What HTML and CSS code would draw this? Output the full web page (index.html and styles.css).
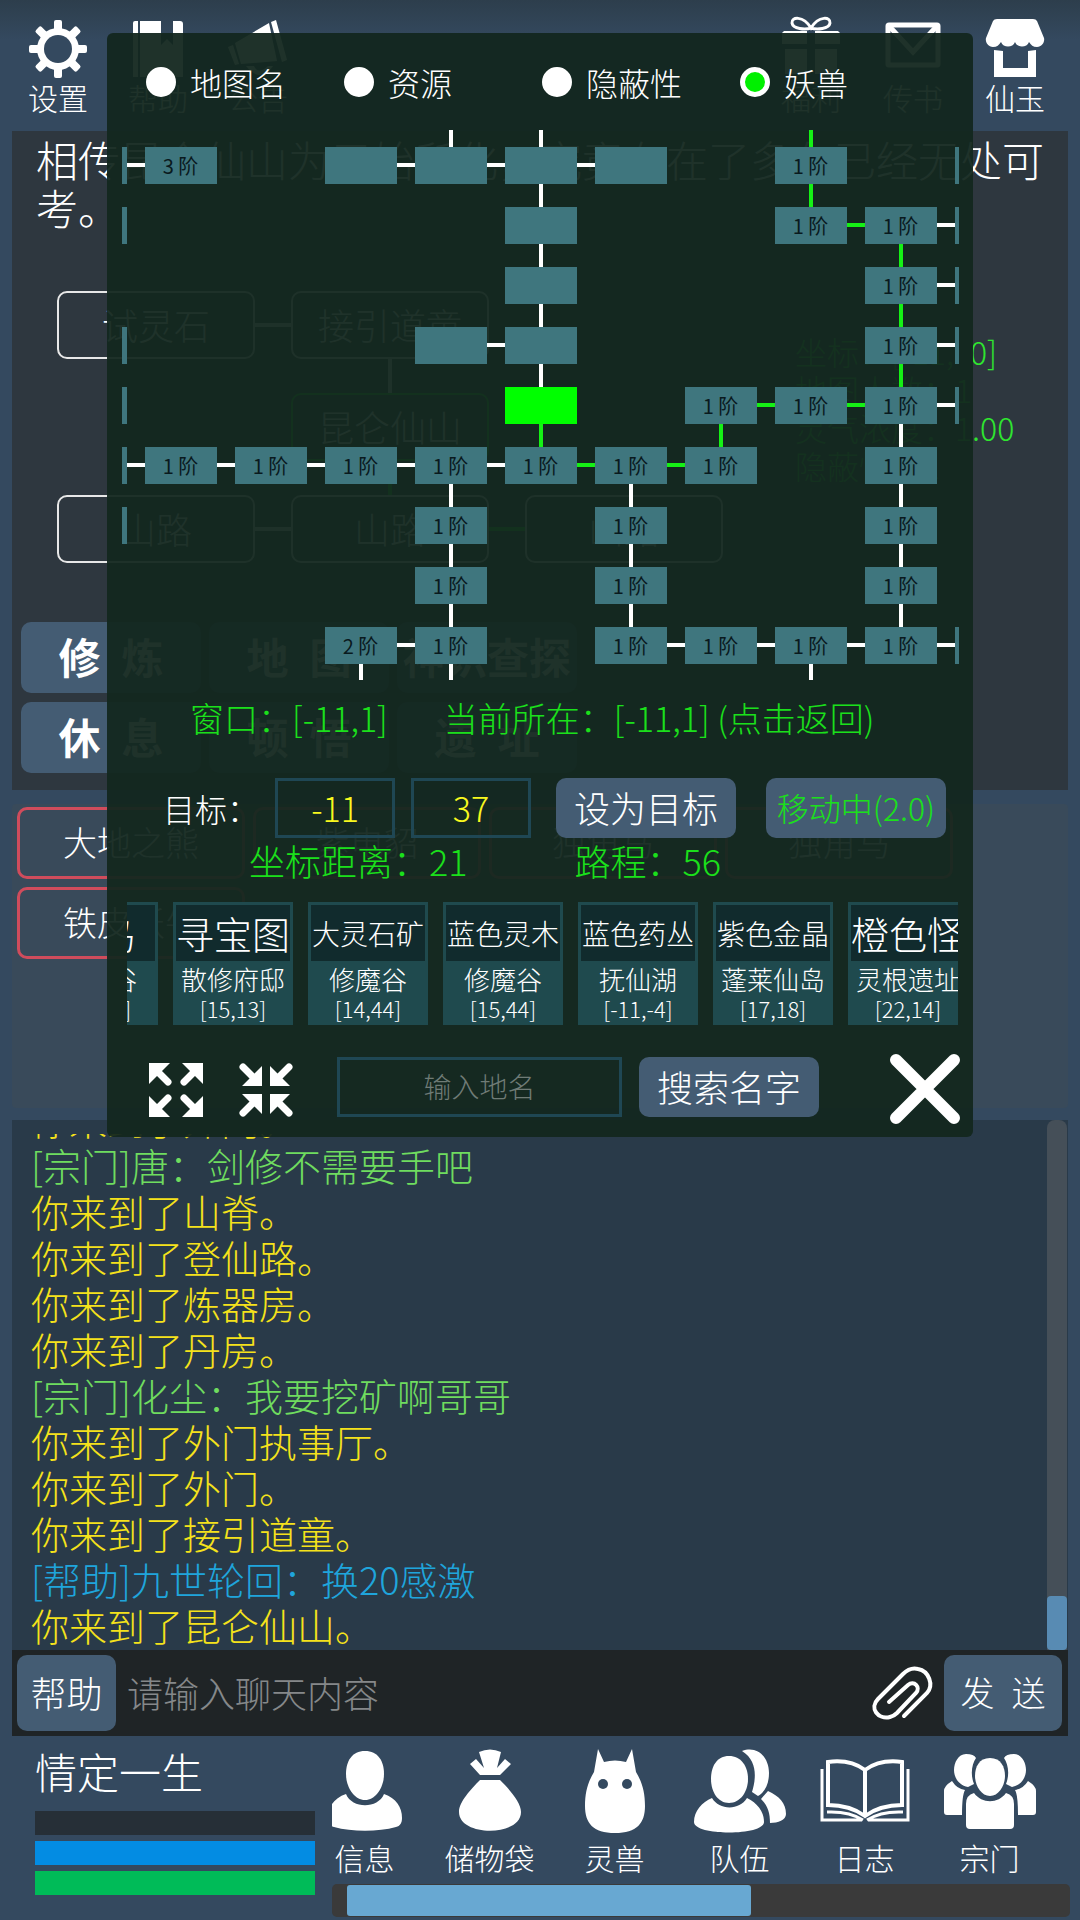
FILE: index.html
```html
<!DOCTYPE html>
<html lang="zh-CN">
  <head>
    <meta charset="UTF-8" />
    <meta name="viewport" content="width=device-width, initial-scale=1.0" />
    <title>昆仑仙山</title>
    <link rel="stylesheet" href="styles.css" />
  </head>
  <body>
    <div class="app">
      <header class="top">
        <div class="top-group">
          <button class="top-btn">
            <svg viewBox="0 0 60 60">
              <g fill="#fff">
                <rect x="26" y="1" width="8" height="58" rx="2" />
                <rect x="26" y="1" width="8" height="58" rx="2" transform="rotate(45 30 30)" />
                <rect x="26" y="1" width="8" height="58" rx="2" transform="rotate(90 30 30)" />
                <rect x="26" y="1" width="8" height="58" rx="2" transform="rotate(135 30 30)" />
                <circle cx="30" cy="30" r="21" />
              </g>
              <circle cx="30" cy="30" r="14" fill="#34495f" />
            </svg>
            设置
          </button>
          <button class="top-btn">
            <svg viewBox="0 0 60 60" fill="#fff">
              <path d="M7 2h3v56H5V4q0-2 2-2zM12 2h21v24l6-6 6 6V2h7q3 0 3 3v53H12z" />
            </svg>
            帮助
          </button>
          <button class="top-btn">
            <svg viewBox="0 0 60 60" fill="#fff">
              <path d="M0 28l5-2 6 19-4 1zM7 24 41 4l8 38-36 3zM43 3l5-2 11 40-5 2zM18 47h8q4 9 14 0h5q-12 18-27 0z" />
            </svg>
            公告
          </button>
        </div>
        <div class="top-group right">
          <button class="top-btn">
            <svg viewBox="0 0 60 60" fill="#fff">
              <path d="M30 9C22-4 10-2 11 4s13 7 19 5c6 2 18 1 19-5S38-4 30 9z" fill="none" stroke="#fff" stroke-width="3" />
              <path d="M3 12h23v13H1V14zM34 12h23l2 2v11H34zM4 30h22v25H4zM34 30h22v25H34z" />
            </svg>
            福利
          </button>
          <button class="top-btn">
            <svg viewBox="0 0 60 60" fill="none" stroke="#fff" stroke-width="5">
              <rect x="5" y="6" width="50" height="40" rx="1" />
              <path d="M6 7l24 26L54 7" />
            </svg>
            传书
          </button>
          <button class="top-btn">
            <svg viewBox="0 0 60 60" fill="#fff">
              <path d="M12 0h36q3 0 4 2l7 17c1 4-2 9-7 9-4 0-6-2-8-5-2 6-12 6-14 0-2 6-12 6-14 0-2 3-4 5-8 5C3 28 0 23 1 19L8 2q1-2 4-2z" />
              <path d="M9 31l9 1v17h25V32l8-1v27H9z" />
            </svg>
            仙玉
          </button>
        </div>
      </header>

      <section class="panel scene">
        <p class="story">相传昆仑仙山为元始所化，究竟存在了多久已经无处可考。</p>
        <div class="scene-body">
          <div class="places">
            <button class="place link-right">试灵石</button>
            <button class="place link-down">接引道童</button>
            <span></span>
            <span></span>
            <button class="place here link-down">昆仑仙山</button>
            <span></span>
            <button class="place link-right">山路</button>
            <button class="place link-right way">山路</button>
            <button class="place">山路</button>
          </div>
          <div class="info">
            <div>坐标：[-11,&ensp;0]</div>
            <div>地图人数：1</div>
            <div>灵气浓度：1.00</div>
            <div>隐蔽性：1</div>
          </div>
        </div>
        <div class="actions">
          <button class="btn act">修&ensp;炼</button>
          <button class="btn act">地&ensp;图</button>
          <button class="btn act">神识查探</button>
          <button class="btn act">休&ensp;息</button>
          <button class="btn act">顿&ensp;悟</button>
          <button class="btn act">遗&ensp;址</button>
        </div>
      </section>

      <section class="panel monsters">
        <button class="monster">大地之熊</button>
        <button class="monster">紫电貂</button>
        <button class="monster">独角马</button>
        <button class="monster">独角马</button>
        <button class="monster">铁皮妖牛</button>
      </section>

      <section class="chat">
        <div class="log">
          <p>你来到了外门。</p>
          <p class="sect">[宗门]唐：剑修不需要手吧</p>
          <p>你来到了山脊。</p>
          <p>你来到了登仙路。</p>
          <p>你来到了炼器房。</p>
          <p>你来到了丹房。</p>
          <p class="sect">[宗门]化尘：我要挖矿啊哥哥</p>
          <p>你来到了外门执事厅。</p>
          <p>你来到了外门。</p>
          <p>你来到了接引道童。</p>
          <p class="help">[帮助]九世轮回：换20感激</p>
          <p>你来到了昆仑仙山。</p>
        </div>
        <div class="log-bar"><div class="log-thumb"></div></div>
      </section>

      <form class="say" onsubmit="return false">
        <button class="btn say-channel" type="button">帮助</button>
        <input class="say-text" type="text" aria-label="聊天内容" placeholder="请输入聊天内容" />
        <button class="say-file" type="button" aria-label="附件">
          <svg viewBox="0 0 60 54" fill="none" stroke="#fff" stroke-width="4" stroke-linecap="round">
            <path d="M32 50 55 27C62 19 57 5 46 3q-8-2-15 5L6 33c-9 9 0 21 12 18q4-1 7-4L44 27c5-6-2-13-8-8L17 36" />
          </svg>
        </button>
        <button class="btn say-send">发&ensp;送</button>
      </form>

      <footer class="bottom">
        <div class="player">
          <div class="player-name">情定一生</div>
          <div class="bar exp"></div>
          <div class="bar mana"></div>
          <div class="bar life"></div>
        </div>
        <div class="menu">
          <nav class="menu-list">
            <button class="menu-btn">
              <svg viewBox="0 0 92 84" fill="#fff">
                <path d="M46 2c13 0 19 10 19 23S57 51 46 51 27 38 27 25 33 2 46 2z" />
                <path d="M27 45c6 15 32 15 38 0 12 4 18 13 18 24 0 5-2 8-6 9-18 5-44 5-62 0-4-1-6-4-6-9 0-11 6-20 18-24z" />
              </svg>
              信息
            </button>
            <button class="menu-btn">
              <svg viewBox="0 0 92 84" fill="#fff">
                <path d="M35 3q11-5 22 0l-4 16 8-9 6 5-11 11H36L26 15l6-5 8 9zM36 31h20c9 9 21 22 21 32 0 25-62 25-62 0 0-10 12-23 21-32z" />
              </svg>
              储物袋
            </button>
            <button class="menu-btn">
              <svg viewBox="0 0 92 84">
                <path d="M29 0l6 13q11-3 22 0l6-13 4 23c6 10 9 20 9 34 0 17-8 27-30 27S16 74 16 57c0-14 3-24 9-34z" fill="#fff" />
                <circle cx="34" cy="35" r="5" fill="#34495f" />
                <circle cx="58" cy="35" r="5" fill="#34495f" />
              </svg>
              灵兽
            </button>
            <button class="menu-btn">
              <svg viewBox="0 0 92 84" fill="#fff">
                <path d="M48 2c16-6 27 7 27 22 0 11-4 19-11 23l-6-4c4-13 6-31-10-41z" />
                <path d="M74 42c11 5 18 12 18 23 0 6-8 9-16 9 0-10-2-17-9-24z" />
                <path d="M35 7c12 0 19 10 19 23S46 54 35 54 17 43 17 30 23 7 35 7z" />
                <path d="M18 49c7 12 27 13 35 0 10 5 17 13 17 24 0 14-70 14-70 0 0-11 8-20 18-24z" />
              </svg>
              队伍
            </button>
            <button class="menu-btn">
              <svg viewBox="0 0 92 84" fill="none" stroke="#fff" stroke-width="4">
                <path d="M9 13q22-3 37 8 15-11 37-8v43q-22 0-37 11Q31 56 9 56zM46 21v46" />
                <path d="M3 20v51h40M89 20v51H49M8 63q22-1 36 8M84 63q-22-1-36 8" stroke-width="3" />
              </svg>
              日志
            </button>
            <button class="menu-btn">
              <svg viewBox="0 0 92 84" fill="#fff">
                <path d="M22 5q8 0 10 4c-4 6-6 16-2 26l-6 3C14 36 10 28 10 21S14 5 22 5zM70 5q-8 0-10 4c4 6 6 16 2 26l6 3c10-2 14-10 14-17S78 5 70 5z" />
                <path d="M8 32q5 8 13 9-3 5-3 25H3q-3 0-3-3V42q0-5 8-10zM84 32q-5 8-13 9 3 5 3 25h15q3 0 3-3V42q0-5-8-10z" />
                <path d="M46 9c11 0 15 9 15 18s-6 20-15 20-15-11-15-20S35 9 46 9z" />
                <path d="M30 44c8 11 24 11 32 0q8 2 8 11v21q0 4-4 4H26q-4 0-4-4V55q0-9 8-11z" />
              </svg>
              宗门
            </button>
          </nav>
          <div class="menu-bar"><div class="menu-thumb"></div></div>
        </div>
      </footer>

      <div class="dialog">
        <div class="filters">
          <label class="filter"><input type="radio" name="filter" />地图名</label>
          <label class="filter"><input type="radio" name="filter" />资源</label>
          <label class="filter"><input type="radio" name="filter" />隐蔽性</label>
          <label class="filter"><input type="radio" name="filter" checked />妖兽</label>
        </div>
        <div class="map"></div>
        <div class="status">
          <span>窗口：[-11,1]</span>
          <button class="back">当前所在：[-11,1] (点击返回)</button>
        </div>
        <div class="target">
          <label for="x">目标：</label>
          <input class="field coord" id="x" type="text" value="-11" />
          <input class="field coord" type="text" value="37" aria-label="目标纵坐标" />
          <button class="btn">设为目标</button>
          <button class="btn moving">移动中(2.0)</button>
        </div>
        <div class="distance">
          <span>坐标距离：21</span>
          <span>路程：56</span>
        </div>
        <div class="marks">
          <button class="mark"><b class="big">灵鸟</b><span>修魔谷</span><em>[14,44]</em></button>
          <button class="mark"><b class="big">寻宝图</b><span>散修府邸</span><em>[15,13]</em></button>
          <button class="mark"><b>大灵石矿</b><span>修魔谷</span><em>[14,44]</em></button>
          <button class="mark"><b>蓝色灵木</b><span>修魔谷</span><em>[15,44]</em></button>
          <button class="mark"><b>蓝色药丛</b><span>抚仙湖</span><em>[-11,-4]</em></button>
          <button class="mark"><b>紫色金晶</b><span>蓬莱仙岛</span><em>[17,18]</em></button>
          <button class="mark"><b class="big">橙色怪</b><span>灵根遗址</span><em>[22,14]</em></button>
        </div>
        <div class="tools">
          <button class="zoom" aria-label="放大">
            <svg viewBox="0 0 54 54" fill="#fff" stroke="#fff">
              <path d="M0 0h21L0 21zM54 0H33l21 21zM0 54h21L0 33zM54 54H33l21-21z" stroke="none" />
              <path d="M8 8l11 11M46 8 35 19M8 46l11-11M46 46 35 35" stroke-width="7" stroke-linecap="round" />
            </svg>
          </button>
          <button class="zoom" aria-label="缩小">
            <svg viewBox="0 0 54 54" fill="#fff" stroke="#fff">
              <path d="M23 23H3L23 3zM31 23h20L31 3zM23 31H3l20 20zM31 31h20L31 51z" stroke="none" />
              <path d="M4 4l13 13M50 4 37 17M4 50l13-13M50 50 37 37" stroke-width="7" stroke-linecap="round" />
            </svg>
          </button>
          <input class="field search" type="text" aria-label="地名" placeholder="输入地名" />
          <button class="btn">搜索名字</button>
          <button class="close" aria-label="关闭">
            <svg viewBox="0 0 72 72" stroke="#fff" stroke-width="12" stroke-linecap="round">
              <path d="M7 7l58 58M65 7 7 65" />
            </svg>
          </button>
        </div>
      </div>
    </div>
    <script src="map.js"></script>
  </body>
</html>
```
FILE: styles.css
```css
* {
  box-sizing: border-box;
}
body {
  margin: 0;
  background-color: #34495f;
  color: white;
  font-family: "Noto Sans CJK SC", sans-serif;
  font-weight: 300;
}
button {
  padding: 0;
  border: none;
  background: none;
  color: inherit;
  font: inherit;
  white-space: nowrap;
  cursor: pointer;
}
input {
  font: inherit;
}
p {
  margin: 0;
}
svg {
  display: block;
  overflow: visible;
}
.app {
  position: relative;
  display: flex;
  flex-direction: column;
  height: 100vh;
  background: linear-gradient(#2d3e4c, #34495f 40px);
}
.btn {
  height: 60px;
  padding-bottom: 3px;
  border-radius: 10px;
  background-color: #445c73;
  font-size: 36px;
}

/* top icons */
.top {
  display: flex;
  justify-content: space-between;
  flex: none;
  height: 131px;
  padding: 19px 14px 0 8px;
}
.top-group {
  display: flex;
}
.top-btn {
  display: flex;
  flex-direction: column;
  align-items: center;
  width: 100px;
  font-size: 30px;
  line-height: 36px;
}
.right .top-btn {
  width: 102px;
}
.top-btn svg {
  width: 60px;
  height: 60px;
}

/* scene */
.panel {
  flex: none;
  margin: 0 12px;
}
.scene {
  background-color: #2e373f;
  padding-top: 4px;
  padding-bottom: 17px;
}
.story {
  padding: 0 24px;
  font-size: 42px;
  line-height: 48px;
}
.scene-body {
  display: flex;
  gap: 72px;
  margin-top: 60px;
  padding-left: 45px;
}
.places {
  display: grid;
  grid-template-columns: repeat(3, 198px);
  gap: 34px 36px;
}
.place {
  position: relative;
  height: 68px;
  padding-bottom: 3px;
  border: 2px solid #e8e8e8;
  border-radius: 10px;
  font-size: 36px;
}
.place::after {
  position: absolute;
  background-color: #e8e8e8;
}
.link-right::after {
  content: "";
  top: 30px;
  left: 196px;
  width: 36px;
  height: 4px;
}
.link-down::after {
  content: "";
  top: 66px;
  left: 95px;
  width: 4px;
  height: 34px;
}
.place.here {
  border-color: #1be01b;
}
.here::after,
.way::after {
  background-color: #1be01b;
}
.info {
  padding-top: 41px;
  color: #2fe62f;
  font-size: 32px;
  line-height: 38px;
}
.actions {
  display: grid;
  grid-template-columns: repeat(3, 180px);
  gap: 9px 8px;
  margin-top: 59px;
  padding-left: 9px;
}
.act {
  height: 71px;
  padding-bottom: 5px;
  font-size: 42px;
  font-weight: bold;
}

/* monsters */
.monsters {
  display: grid;
  grid-template-columns: repeat(4, 228px);
  align-content: start;
  gap: 8px;
  height: 304px;
  margin-top: 14px;
  padding: 3px 5px;
  border-radius: 4px;
  background-color: #394a5a;
}
.monster {
  height: 72px;
  padding-bottom: 4px;
  border: 3px solid #d04c5c;
  border-radius: 10px;
  font-size: 34px;
}

/* chat */
.chat {
  display: flex;
  flex: 1;
  min-height: 0;
  margin: 12px 12px 0;
  padding-top: 14px;
  background-color: #293a49;
}
.log {
  display: flex;
  flex-direction: column;
  justify-content: flex-end;
  flex: 1;
  overflow: hidden;
  padding: 0 0 2px 19px;
  color: #f5e21b;
  font-size: 38px;
  line-height: 46px;
}
.log p {
  flex: none;
}
.log .sect {
  color: #6fdc5f;
}
.log .help {
  color: #1fa5dc;
}
.log-bar {
  display: flex;
  align-items: flex-end;
  width: 20px;
  margin: -14px 1px 0 0;
  border-radius: 8px 8px 0 0;
  background-color: #454f58;
}
.log-thumb {
  width: 100%;
  height: 54px;
  border-radius: 4px;
  background-color: #588bb3;
}
.say {
  display: flex;
  align-items: center;
  flex: none;
  height: 86px;
  margin: 0 12px;
  padding: 0 6px 0 5px;
  background-color: #1f2426;
}
.say .btn {
  height: 76px;
}
.say-channel {
  width: 99px;
}
.say-text {
  flex: 1;
  min-width: 0;
  padding: 0 11px 3px;
  border: none;
  outline: none;
  background: none;
  color: white;
  font-size: 36px;
}
.say-text::placeholder {
  color: #85888a;
}
.say-file svg {
  width: 60px;
  height: 54px;
}
.say-send.btn {
  width: 118px;
  margin-left: 12px;
  font-size: 34px;
}

/* player and menu */
.bottom {
  display: flex;
  flex: none;
  gap: 17px;
  height: 184px;
  padding: 0 10px 3px 35px;
}
.player {
  width: 280px;
}
.player-name {
  height: 75px;
  font-size: 42px;
  line-height: 70px;
}
.bar {
  height: 24px;
  margin-bottom: 6px;
}
.exp {
  background-color: #262f37;
}
.mana {
  background-color: #038ce3;
}
.life {
  background-color: #00bb58;
}
.menu {
  display: flex;
  flex-direction: column;
  justify-content: space-between;
  flex: 1;
  min-width: 0;
}
.menu-list {
  display: flex;
  justify-content: flex-end;
  overflow: hidden;
  padding: 13px 18px 0 0;
}
.menu-btn {
  display: flex;
  flex-direction: column;
  align-items: center;
  gap: 6px;
  flex: none;
  width: 125px;
  font-size: 30px;
  line-height: 36px;
}
.menu-btn svg {
  width: 92px;
  height: 84px;
}
.menu-bar {
  height: 33px;
  padding: 1px 15px;
  border-radius: 5px;
  background-color: #3a3a3a;
}
.menu-thumb {
  width: 57%;
  height: 31px;
  border-radius: 3px;
  background-color: #68a8d2;
}

/* map dialog */
.dialog {
  position: absolute;
  top: 33px;
  left: 107px;
  right: 107px;
  padding: 0 14px 20px 15px;
  border-radius: 6px;
  background-color: rgba(19, 39, 31, 0.95);
}
.filters {
  display: grid;
  grid-template-columns: repeat(4, 198px);
  height: 97px;
  padding-left: 24px;
}
.filter {
  display: flex;
  align-items: center;
  gap: 14px;
  font-size: 32px;
}
.filter input {
  appearance: none;
  width: 30px;
  height: 30px;
  margin: 0;
  border: 5px solid white;
  border-radius: 50%;
  background-color: white;
}
.filter input:checked {
  background-color: #00f000;
}
.map {
  display: grid;
  grid-template-columns: repeat(11, 72px);
  grid-template-rows: repeat(9, 37px);
  gap: 23px 18px;
  justify-content: center;
  align-content: center;
  height: 550px;
  overflow: hidden;
}
.node {
  position: relative;
  background-color: #3f767e;
  color: #0a1a1e;
  font-size: 20px;
  font-weight: 400;
  line-height: 37px;
}
.node.current {
  background-color: #00ff00;
}
.road {
  position: absolute;
  background-color: white;
}
.road.go {
  background-color: #15f015;
}
.road.r {
  top: 16px;
  left: 72px;
  width: 18px;
  height: 4px;
}
.road.d,
.road.u {
  left: 34px;
  width: 4px;
  height: 23px;
}
.road.d {
  top: 37px;
}
.road.u {
  bottom: 37px;
}
.status {
  display: flex;
  gap: 56px;
  height: 98px;
  padding: 17px 0 0 68px;
  color: #1be01b;
  font-size: 34px;
  line-height: 42px;
}
.back {
  height: 42px;
}
.target {
  display: flex;
  align-items: center;
  justify-content: flex-end;
  padding-right: 13px;
  font-size: 32px;
}
.field {
  height: 60px;
  padding-bottom: 3px;
  border: 3px solid #1f4754;
  outline: none;
  background: none;
  text-align: center;
}
.coord {
  width: 120px;
  margin-left: 16px;
  color: #f8f81e;
  font-size: 34px;
}
.target .btn {
  width: 180px;
  margin-left: 25px;
}
.target .moving {
  margin-left: 30px;
  color: #1be01b;
  font-size: 32px;
}
.distance {
  display: flex;
  gap: 107px;
  height: 64px;
  padding-left: 127px;
  color: #1be01b;
  font-size: 36px;
  line-height: 45px;
}
.marks {
  display: flex;
  justify-content: flex-end;
  gap: 15px;
  margin: 0 1px 0 5px;
  overflow: hidden;
}
.mark {
  display: flex;
  flex-direction: column;
  flex: none;
  width: 120px;
  height: 123px;
  border: 3px solid #1f4a4e;
  background-color: #1f4a4e;
  line-height: 30px;
}
.mark:last-child {
  margin-right: -10px;
}
.mark b {
  width: 100%;
  height: 58px;
  background-color: #112b2d;
  font-size: 28px;
  font-weight: inherit;
  line-height: 56px;
}
.mark .big {
  font-size: 38px;
}
.mark span {
  width: 100%;
  padding-top: 3px;
  font-size: 26px;
}
.mark em {
  width: 100%;
  font-size: 22px;
  font-style: normal;
  line-height: 28px;
}
.tools {
  display: flex;
  align-items: flex-end;
  height: 92px;
  padding-left: 27px;
}
.zoom {
  width: 54px;
  height: 54px;
  margin-right: 36px;
}
.search {
  flex: 1;
  min-width: 0;
  margin-left: 8px;
  font-size: 28px;
  color: white;
}
.search::placeholder {
  color: #6f7b76;
}
.tools .btn {
  width: 180px;
  margin-left: 17px;
}
.close {
  width: 72px;
  margin: 0 -2px -8px 70px;
}
```
FILE: map.js
```js
// [column, row, label, roads]  r/d/u = right/down/up, capital letter = part of the route
const nodes = [
  [1, 1, "", "r"], [2, 1, "3 阶", ""], [4, 1, "", "r"], [5, 1, "", "ru"], [6, 1, "", "rud"],
  [7, 1, "", ""], [9, 1, "1 阶", "UD"], [11, 1, "", ""],
  [1, 2, "", ""], [6, 2, "", "d"], [9, 2, "1 阶", "R"], [10, 2, "1 阶", "rD"], [11, 2, "", ""],
  [6, 3, "", "d"], [10, 3, "1 阶", "rD"], [11, 3, "", ""],
  [1, 4, "", ""], [5, 4, "", "r"], [6, 4, "", "d"], [10, 4, "1 阶", "rD"], [11, 4, "", ""],
  [1, 5, "", ""], [6, 5, "", "D"], [8, 5, "1 阶", "RD"], [9, 5, "1 阶", "R"],
  [10, 5, "1 阶", "rd"], [11, 5, "", ""],
  [1, 6, "", "r"], [2, 6, "1 阶", "r"], [3, 6, "1 阶", "r"], [4, 6, "1 阶", "r"], [5, 6, "1 阶", "rd"],
  [6, 6, "1 阶", "R"], [7, 6, "1 阶", "Rd"], [8, 6, "1 阶", ""], [10, 6, "1 阶", "d"],
  [1, 7, "", ""], [5, 7, "1 阶", "d"], [7, 7, "1 阶", "d"], [10, 7, "1 阶", "d"],
  [5, 8, "1 阶", "d"], [7, 8, "1 阶", "d"], [10, 8, "1 阶", "d"],
  [4, 9, "2 阶", "rd"], [5, 9, "1 阶", "d"], [7, 9, "1 阶", "r"], [8, 9, "1 阶", "r"],
  [9, 9, "1 阶", "rd"], [10, 9, "1 阶", "r"], [11, 9, "", ""],
];

const map = document.querySelector(".map");
for (const [col, row, label, roads] of nodes) {
  const node = document.createElement("button");
  node.className = col === 6 && row === 5 ? "node current" : "node";
  node.style.gridArea = `${row} / ${col}`;
  node.textContent = label;
  for (const road of roads) {
    const line = document.createElement("i");
    line.className = "road " + road.toLowerCase();
    if (road !== road.toLowerCase()) line.classList.add("go");
    node.appendChild(line);
  }
  map.appendChild(node);
}
```
